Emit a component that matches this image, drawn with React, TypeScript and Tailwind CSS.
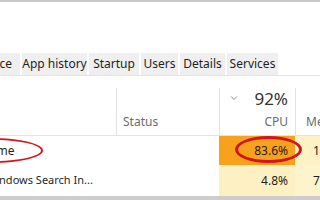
export default function App() {
  const tabs = [
    { label: "App history", w: "w-[65px]" },
    { label: "Startup", w: "w-[50px]" },
    { label: "Users", w: "w-[37px]" },
    { label: "Details", w: "w-[45px]" },
    { label: "Services", w: "w-[51px]" },
  ];

  return (
    <div
      className="relative w-[320px] h-[200px] overflow-hidden bg-white text-[#1f1f1f]"
      style={{ fontFamily: '"Noto Sans", "Open Sans", sans-serif' }}
    >
      <div className="h-[2px] bg-[#c9c9c9]" />
      <div className="h-[51px]" />

      {/* tab strip */}
      <div className="flex h-[22px] gap-[2px] text-[12px] leading-none">
        <div className="flex w-[20px] shrink-0 items-center justify-end overflow-hidden whitespace-nowrap bg-[#efefef] pr-[8px]">
          Performance
        </div>
        {tabs.map((t) => (
          <div
            key={t.label}
            className={`flex ${t.w} shrink-0 items-center justify-center whitespace-nowrap bg-[#efefef]`}
          >
            {t.label}
          </div>
        ))}
      </div>

      {/* column headers */}
      <div className="flex h-[61px] border-t border-b border-[#e3e3e3] text-[12px]">
        <div className="w-[116px] shrink-0" />
        <div className="mt-[12px] flex w-[103px] shrink-0 items-end border-l border-[#e3e3e3] pb-[4px] pl-[6px] text-[#6b6b6b]">
          Status
        </div>
        <div className="mt-[12px] flex w-[76px] shrink-0 flex-col border-l border-[#e3e3e3] pr-[7px]">
          <div className="flex items-start justify-between pl-[10px] pt-[1px]">
            <svg width="8" height="6" viewBox="0 0 8 6" className="mt-[6px]">
              <path d="M1 1.5 L4 4.5 L7 1.5" fill="none" stroke="#8a8a8a" strokeWidth="1" />
            </svg>
            <span className="text-[17px] leading-[20px] text-[#333]">92%</span>
          </div>
          <div className="mt-auto pb-[4px] text-right text-[#6b6b6b]">CPU</div>
        </div>
        <div className="mt-[12px] flex min-w-0 flex-1 items-end overflow-hidden whitespace-nowrap border-l border-[#e3e3e3] pb-[4px] pl-[10px] text-[#6b6b6b]">
          Memory
        </div>
      </div>

      {/* rows */}
      <div className="flex h-[29px] text-[12px]">
        <div className="flex w-[219px] shrink-0 items-center overflow-hidden whitespace-nowrap">
          <span className="-ml-[74px]">Google Chrome</span>
        </div>
        <div className="flex w-[76px] shrink-0 items-center justify-end bg-[#f7a11c] pr-[7px]">83.6%</div>
        <div className="flex min-w-0 flex-1 items-center overflow-hidden whitespace-nowrap bg-[#fdf1c6] pl-[18px]">141.2 MB</div>
      </div>
      <div className="flex h-[31px] text-[12px]">
        <div className="flex w-[219px] shrink-0 items-center overflow-hidden whitespace-nowrap">
          <span className="-ml-[14px] text-[11px]">Windows Search In...</span>
        </div>
        <div className="flex w-[76px] shrink-0 items-center justify-end bg-[#fdf0c2] pr-[7px]">4.8%</div>
        <div className="flex min-w-0 flex-1 items-center overflow-hidden whitespace-nowrap bg-[#fdf3cc] pl-[18px]">7.4 MB</div>
      </div>
      <div className="h-[4px] bg-[#cdcdcd]" />

      {/* red annotation ellipses */}
      <div className="pointer-events-none absolute left-[-58px] top-[138px] h-[25px] w-[101px] rounded-[50%] border-[2.5px] border-[#d2151d]" />
      <div className="pointer-events-none absolute left-[235px] top-[136px] h-[27px] w-[67px] rounded-[50%] border-[3px] border-[#d2151d]" />
    </div>
  );
}
